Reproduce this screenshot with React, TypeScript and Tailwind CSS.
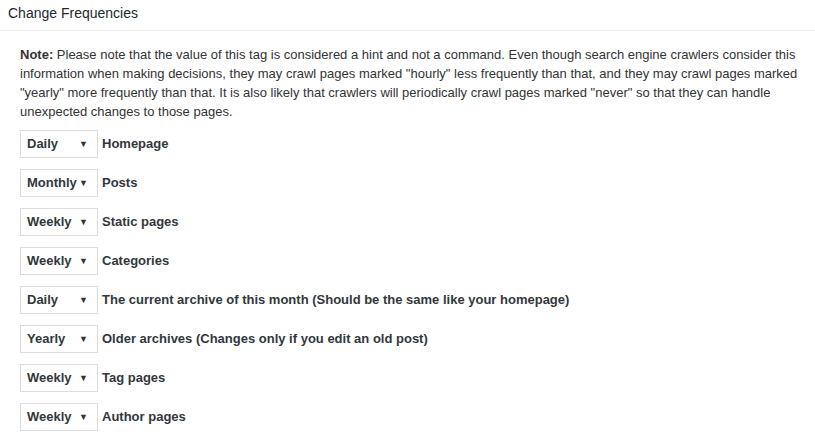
const rows: { freq: string; label: string }[] = [
	{ freq: 'Daily', label: 'Homepage' },
	{ freq: 'Monthly', label: 'Posts' },
	{ freq: 'Weekly', label: 'Static pages' },
	{ freq: 'Weekly', label: 'Categories' },
	{ freq: 'Daily', label: 'The current archive of this month (Should be the same like your homepage)' },
	{ freq: 'Yearly', label: 'Older archives (Changes only if you edit an old post)' },
	{ freq: 'Weekly', label: 'Tag pages' },
	{ freq: 'Weekly', label: 'Author pages' },
];

const FreqSelect = ({ value }: { value: string }) => (
	<div className="flex h-[28px] w-[78px] shrink-0 items-center justify-between border border-[#dddddd] bg-white pl-[6px] pr-[9px]">
		<span className="font-bold text-[#32373c]">{value}</span>
		<span className="text-[9px] leading-none text-[#333]">▼</span>
	</div>
);

export default function App() {
	return (
		<div className="min-h-[443px] w-[815px] bg-white font-['Liberation_Sans',Arial,sans-serif] text-[13px] text-[#333]">
			<div className="flex h-[31px] items-center border-b border-[#eeeeee] px-[8px] pb-[4px] text-[14px] text-[#23282d]">
				Change Frequencies
			</div>
			<div className="pl-[20px] pr-[12px] pt-[14px]">
				<p className="leading-[19px]">
					<strong>Note:</strong> Please note that the value of this tag is considered a hint and
					not a command. Even though search engine crawlers consider this information when making
					decisions, they may crawl pages marked "hourly" less frequently than that, and they may
					crawl pages marked "yearly" more frequently than that. It is also likely that crawlers
					will periodically crawl pages marked "never" so that they can handle unexpected changes
					to those pages.
				</p>
				<div className="mt-[9px] flex flex-col gap-[11px]">
					{rows.map((row, i) => (
						<div key={i} className="flex items-center gap-[4px]">
							<FreqSelect value={row.freq} />
							<span className="font-bold text-[#32373c]">{row.label}</span>
						</div>
					))}
				</div>
			</div>
		</div>
	);
}
